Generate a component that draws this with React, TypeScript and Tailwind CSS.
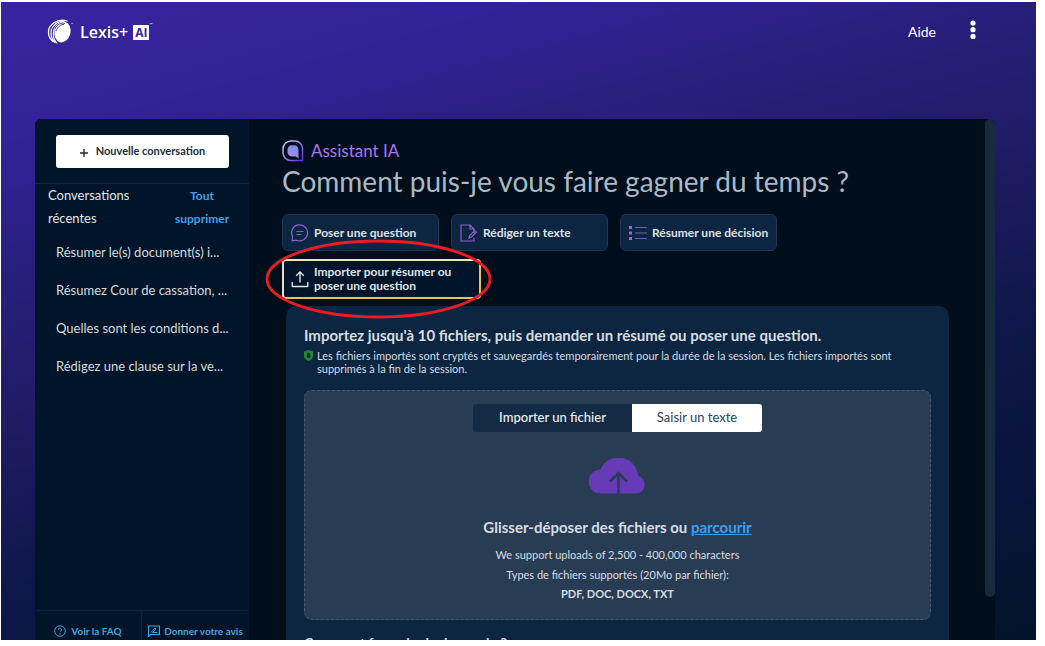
import React from "react";

const recent = [
  "Résumer le(s) document(s) i...",
  "Résumez Cour de cassation, ...",
  "Quelles sont les conditions d...",
  "Rédigez une clause sur la ve...",
];

function Globe() {
  return (
    <svg viewBox="0 0 26 26" className="size-[26px]" aria-hidden="true">
      <ellipse cx="15.500" cy="13" rx="8" ry="10.500" fill="#fff" transform="rotate(14 15.500 13)" />
      <g fill="none" stroke="#fff" strokeLinecap="round">
        <path d="M20 2C10-1 1.500 6 1.500 13c0 4 2 7.500 4.500 9.500" strokeWidth="1.300" />
        <path d="M17 2.500C9 2 4 8 4 14c0 4 1.800 7.500 4 9.500" strokeWidth="1.200" />
        <path d="M15 4C10 4 6.300 9 6.300 15c0 4 1.200 7 3.700 9" strokeWidth="1.200" />
      </g>
      <path d="M18 4.500c-4-1.500-8 1-10 5M17 5.500c-3-.5-6 2-8 6.500" fill="none" stroke="#37249b" strokeWidth=".9" />
      <circle cx="25" cy="4.500" r=".7" fill="#fff" opacity=".7" />
    </svg>
  );
}

function AssistantIcon() {
  return (
    <svg viewBox="0 0 22 22" className="size-[22px]" aria-hidden="true">
      <defs>
        <linearGradient id="ring" x1="0" y1="0" x2="1" y2="1">
          <stop offset="0" stopColor="#d8d4e0" />
          <stop offset=".5" stopColor="#8f86f0" />
          <stop offset="1" stopColor="#6a1ff5" />
        </linearGradient>
        <linearGradient id="fill" x1=".7" y1="0" x2=".3" y2="1">
          <stop offset="0" stopColor="#6f8df5" />
          <stop offset="1" stopColor="#b98cdc" />
        </linearGradient>
      </defs>
      <path d="M9 1h4a7.500 7.500 0 0 1 7.500 7.500v12H9A8 8 0 0 1 1 12.500V9a8 8 0 0 1 8-8Z" fill="none" stroke="url(#ring)" strokeWidth="1.500" />
      <path d="M10 5.200h2a4.500 4.500 0 0 1 4.500 4.500v9L14 16.600h-4a4.500 4.500 0 0 1-4.500-4.500V9.700A4.500 4.500 0 0 1 10 5.200Z" fill="url(#fill)" />
    </svg>
  );
}

function ChatIcon() {
  return (
    <svg viewBox="0 0 18 18" className="size-[18px] shrink-0" fill="none" stroke="#8d5fd0" strokeWidth="1.200" aria-hidden="true">
      <path d="M1.200 16.800 1.500 12.500A8 8 0 1 1 5.500 16.200Z" />
      <path d="M5.500 7.500h7M5.500 10.500h5" />
    </svg>
  );
}

function DraftIcon() {
  return (
    <svg viewBox="0 0 18 18" className="size-[18px] shrink-0" fill="none" stroke="#8d5fd0" strokeWidth="1.200" aria-hidden="true">
      <path d="M14 14v3H1V1h9l4 4v2M10 1v4h4" />
      <path d="m9 14 .7-2.500 5-5 1.700 1.700-5 5ZM13.500 8l1.500 1.500" />
    </svg>
  );
}

function ListIcon() {
  return (
    <svg viewBox="0 0 18 16" className="h-4 w-[18px] shrink-0" aria-hidden="true">
      <path d="M0 1h3v3H0zM0 6.500h3v3H0zM0 12h3v3H0z" fill="#9a68dc" />
      <path d="M6 2.500h12M6 8h12M6 13.500h12" stroke="#7d5abf" strokeWidth="1.200" />
    </svg>
  );
}

function UploadIcon() {
  return (
    <svg viewBox="0 0 18 18" className="size-[18px] shrink-0" fill="none" stroke="#e2e5e8" strokeWidth="1.400" aria-hidden="true">
      <path d="M1.200 12v3.700q0 .8.800.8h14q.8 0 .8-.8V12M9 12.500V2M5.200 5.800 9 2l3.800 3.800" />
    </svg>
  );
}

const action =
  "flex h-[37px] w-[157px] items-center gap-[5px] rounded-md border border-[#1d3557] bg-[#0c2541] pl-2 text-[12px] font-bold whitespace-nowrap text-[#dfe3e6]";

export default function App() {
  return (
    <div className="h-screen overflow-hidden bg-white pt-[2px] pr-[9px] pb-[6px] pl-px font-['Lato',sans-serif]">
      <div className="flex h-full flex-col overflow-hidden bg-[linear-gradient(165deg,#38249e_0%,#34229a_14%,#281f7c_30%,#211c66_44%,#0d1748_66%,#07143b_84%,#021428_100%)]">
        <header className="flex h-[117px] shrink-0 items-start justify-between pt-4 pr-[55px] pl-[46px] text-white">
          <a href="#" className="flex items-center" aria-label="Lexis+ AI">
            <Globe />
            <span className="ml-[7px] font-['Open_Sans',sans-serif] text-[16px] leading-7 font-semibold">Lexis+</span>
            <span className="ml-[5px] bg-white px-[2px] font-['Open_Sans',sans-serif] text-[12px] leading-[15px] font-bold text-[#37249b]">AI</span>
            <span className="self-start pt-1 text-[4px]">™</span>
          </a>
          <nav className="flex items-start gap-7">
            <a href="#" className="pt-1 text-[14px] leading-5">Aide</a>
            <button type="button" aria-label="Menu" className="flex w-[17px] justify-center pt-[2px]">
              <svg viewBox="0 0 6 20" className="h-5 w-[6px]" fill="#fff"><circle cx="3" cy="3" r="2.600" /><circle cx="3" cy="9.700" r="2.600" /><circle cx="3" cy="16.400" r="2.600" /></svg>
            </button>
          </nav>
        </header>

        <div className="mr-[41px] ml-[34px] flex min-h-0 flex-1 overflow-hidden rounded-t-md bg-[#000e1b]">
          <aside className="flex w-[214px] shrink-0 flex-col bg-[#01152a]">
            <div className="border-b border-[#12263a] pt-4 pr-5 pb-[15px] pl-[21px]">
              <button type="button" className="flex h-[33px] w-full items-center justify-center gap-2 rounded-[3px] bg-white text-[11px] font-bold text-[#1b2d43]">
                <svg viewBox="0 0 8 8" className="mt-[2px] size-2" stroke="#1b2d43" strokeWidth="1.400"><path d="M4 0v8M0 4h8" /></svg>
                Nouvelle conversation
              </button>
            </div>
            <div className="flex justify-between pr-5 pl-[13px] leading-[23px]">
              <h2 className="w-24 text-[13px] text-[#e3e6e8]">Conversations récentes</h2>
              <button type="button" className="w-[54px] text-[12px] font-bold text-[#409fe6]">Tout supprimer</button>
            </div>
            <ul className="flex flex-col pt-[3px] pl-[21px] text-[13px] text-[#d5dadd]">
              {recent.map((item) => (
                <li key={item} className="h-[38px]">
                  <a href="#" className="block leading-[38px] whitespace-nowrap">{item}</a>
                </li>
              ))}
            </ul>
            <footer className="mt-auto flex h-[30px] shrink-0 border-t border-[#0b2238] text-[10px] font-bold text-[#3fa3da]">
              <a href="#" className="flex h-10 w-[107px] items-center justify-center gap-[5px] border-r border-[#0b2238]">
                <svg viewBox="0 0 12 12" className="size-3" fill="none" stroke="#3fa3da"><circle cx="6" cy="6" r="5.300" /><path d="M4.400 4.800a1.600 1.600 0 1 1 2.300 1.400q-.7.300-.7 1.200M6 8.200v1.200" /></svg>
                Voir la FAQ
              </a>
              <a href="#" className="flex h-10 flex-1 items-center justify-center gap-1 whitespace-nowrap">
                <svg viewBox="0 0 12 12" className="size-3" fill="none" stroke="#3fa3da"><path d="M.6 11.500V1h10.800v8.500H2.500Z" strokeWidth="1.200" /><path d="M3 7.500 7 3l1 1-3.500 3.500H9.500" /></svg>
                Donner votre avis
              </a>
            </footer>
          </aside>

          <main className="min-w-0 flex-1 overflow-hidden pt-5 pr-9 pl-[33px]">
            <div className="flex items-center gap-[7px]">
              <AssistantIcon />
              <p className="text-[17px] leading-6 text-[#a878f0]">Assistant IA</p>
            </div>
            <h1 className="text-[28px] leading-9 text-[#a9b9c6]">Comment puis-je vous faire gagner du temps ?</h1>

            <div className="mt-[15px] flex flex-wrap gap-x-3 gap-y-2">
              <button type="button" className={action}><ChatIcon />Poser une question</button>
              <button type="button" className={action}><DraftIcon />Rédiger un texte</button>
              <button type="button" className={action}><ListIcon />Résumer une décision</button>
              <div className="relative">
                <button type="button" className="flex h-10 w-[199px] items-center gap-[5px] rounded-[4px] border-2 border-[#e3c455] border-t-[#f1e6b0] border-l-[#e6ded0] bg-[#01152a] pr-4 pl-[7px] text-left text-[12px] leading-[14px] font-bold text-[#dfe3e6]">
                  <UploadIcon />Importer pour résumer ou poser une question
                </button>
                <svg viewBox="0 0 228 80" className="pointer-events-none absolute -top-5 -left-[17px] h-20 w-[228px] max-w-none" fill="none" aria-hidden="true">
                  <ellipse cx="113.500" cy="40" rx="111.500" ry="38" stroke="#e91c24" strokeWidth="2.800" />
                </svg>
              </div>
            </div>

            <section className="mt-[7px] ml-1 rounded-t-[10px] bg-[#0c2541] px-[18px] pt-5 pb-10 text-[#d9dde0]">
              <h2 className="text-[15px] leading-[18px] font-bold">Importez jusqu'à 10 fichiers, puis demander un résumé ou poser une question.</h2>
              <div className="mt-[5px] flex gap-1">
                <svg viewBox="0 0 9 11" className="mt-px h-[11px] w-[9px] shrink-0"><path d="M4.500 0 9 1.500v4q0 4-4.500 5.500Q0 9.500 0 5.500v-4Z" fill="#218a2c" /><path d="M3 5h3v2.500H3zM3.500 5V4a1 1 0 0 1 2 0v1" fill="#0c2541" stroke="#0c2541" strokeWidth=".5" /></svg>
                <p className="text-[11px] leading-[13px]">Les fichiers importés sont cryptés et sauvegardés temporairement pour la durée de la session. Les fichiers importés sont supprimés à la fin de la session.</p>
              </div>
              <div className="mt-[15px] flex flex-col items-center rounded-lg border border-dashed border-[#46596d] bg-[#283c54] pt-[13px] pb-4">
                <div className="flex h-7 overflow-hidden rounded-[3px] text-[13px]">
                  <button type="button" className="w-[159px] bg-[#132b45] font-medium text-[#f0f2f3]">Importer un fichier</button>
                  <button type="button" className="w-[130px] bg-white text-[#2f4262]">Saisir un texte</button>
                </div>
                <svg viewBox="0 0 57 36" className="mt-[26px] h-9 w-[57px]" aria-hidden="true">
                  <path d="M11.500 35.500a12 12 0 0 1 0-24A19.500 19.500 0 0 1 49 17.800a9 9 0 0 1-1.500 17.700Z" fill="#673ab7" />
                  <path d="M29.500 36V16M21 23.500l8.500-8.500 8.500 8.500" fill="none" stroke="#283c54" strokeWidth="2.600" />
                </svg>
                <p className="mt-[23px] text-[15px] leading-5 font-bold">Glisser-déposer des fichiers ou <a href="#" className="text-[#409fe6] underline">parcourir</a></p>
                <p className="mt-2 text-[11px] leading-5">We support uploads of 2,500 - 400,000 characters</p>
                <p className="text-[11px] leading-5">Types de fichiers supportés (20Mo par fichier):</p>
                <p className="text-[11px] leading-[18px] font-bold">PDF, DOC, DOCX, TXT</p>
              </div>
              <h2 className="mt-[14px] text-[14px] leading-[18px] font-bold">Comment formuler la demande ?</h2>
            </section>
          </main>
          <div className="h-[478px] w-[10px] shrink-0 rounded-full bg-[#182a40]" />
        </div>
      </div>
    </div>
  );
}
